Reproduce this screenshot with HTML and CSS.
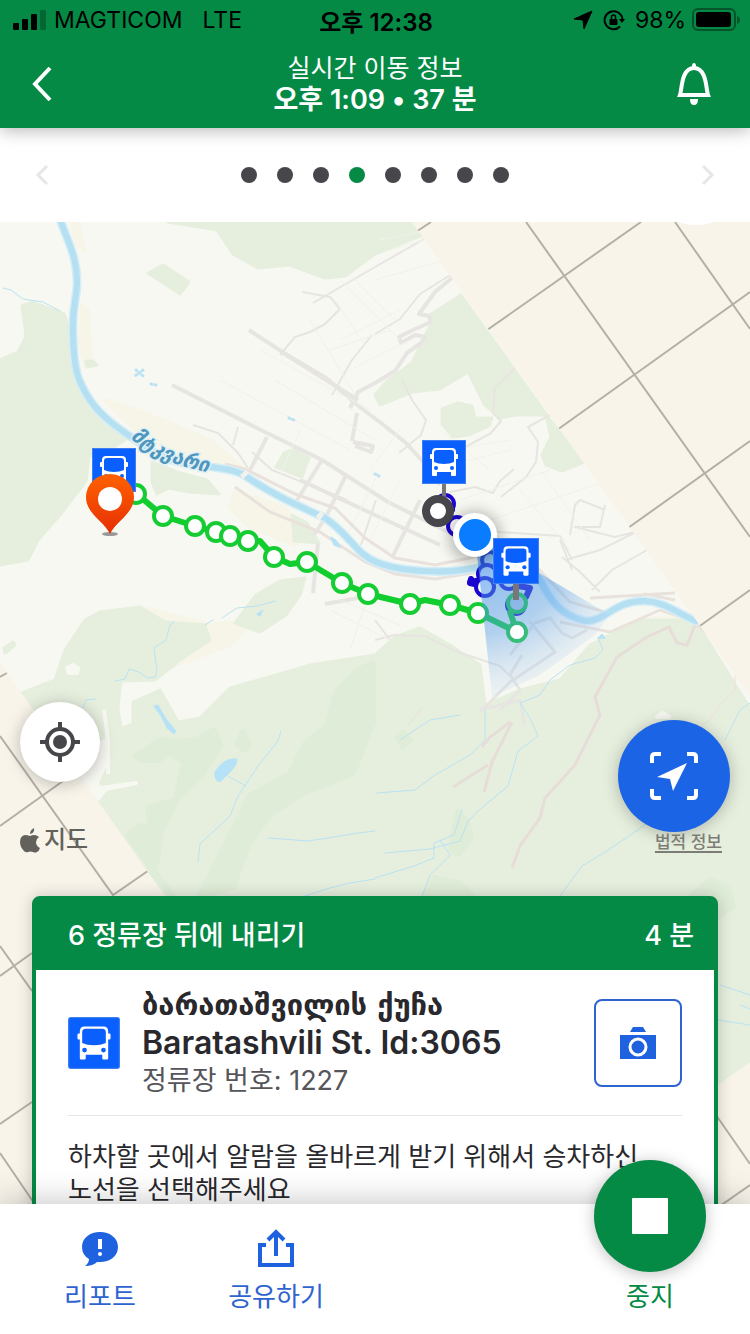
FILE: index.html
```html
<!DOCTYPE html>
<html lang="ko">
<head>
<meta charset="UTF-8">
<meta name="viewport" content="width=device-width, initial-scale=1">
<title>실시간 이동 정보</title>
<link rel="stylesheet" href="styles.css">
</head>
<body>
	<svg class="symbols" aria-hidden="true">
		<symbol id="bus" viewBox="0 0 44 44">
			<rect width="44" height="44" fill="#3f7ff0"/>
			<rect x="1" y="1" width="42" height="42" fill="#0a60ff"/>
			<path fill="#fff" fill-rule="evenodd" d="M14 8h16q4 0 4 4v2h1q1 0 1 1v3q0 1-1 1h-1v16q0 1-1 1h-3q-1 0-1-1v-3H15v3q0 1-1 1h-3q-1 0-1-1V19H9q-1 0-1-1v-3q0-1 1-1h1v-2q0-4 4-4zM15 10q-3 0-3 3v9q4 2 10 2t10-2v-9q0-3-3-3z"/>
			<circle cx="14" cy="28" r="2" fill="#0a60ff"/>
			<circle cx="30" cy="28" r="2" fill="#0a60ff"/>
		</symbol>
	</svg>

	<header class="header">
		<div class="status">
			<div class="carrier">
				<svg width="34" height="22" viewBox="0 0 34 22">
					<rect x="1" y="14" width="6" height="7" rx="1"/>
					<rect x="10" y="10" width="6" height="11" rx="1"/>
					<rect x="19" y="5" width="6" height="16" rx="1"/>
					<rect x="28" y="1" width="6" height="20" rx="1" opacity=".25"/>
				</svg>
				<span>MAGTICOM</span>
				<span class="network">LTE</span>
			</div>
			<div class="clock">오후 12:38</div>
			<div class="battery">
				<svg width="20" height="20" viewBox="0 0 20 20"><path d="M19 1 11 19 10 10 1 9z" stroke="#000" stroke-linejoin="round"/></svg>
				<svg width="22" height="22" viewBox="0 0 22 22">
					<path d="M17 17.500A9 9 0 1 1 19.500 10" fill="none" stroke="#000" stroke-width="2"/>
					<path d="M16 10h6l-3 4z"/>
					<rect x="6.500" y="10" width="8" height="6" rx="1"/>
					<path d="M8.500 10V8q0-2 2-2t2 2v2" fill="none" stroke="#000" stroke-width="1.500"/>
				</svg>
				<span>98%</span>
				<svg class="cell" width="48" height="24" viewBox="0 0 48 24">
					<rect x="1" y="1" width="42" height="21" rx="5" fill="none" stroke="#04552c" stroke-width="2"/>
					<rect x="4" y="4" width="35" height="15" rx="3"/>
					<path d="M45 8q3 1 3 4t-3 4z" fill="#04552c"/>
				</svg>
			</div>
		</div>
		<div class="titlebar">
			<button class="icon-button" aria-label="뒤로">
				<svg width="22" height="36" viewBox="0 0 22 36"><path d="M19 2 4 18l15 16" fill="none" stroke="#fff" stroke-width="4"/></svg>
			</button>
			<h1 class="title">
				<span>실시간 이동 정보</span>
				<strong>오후 1:09 • 37 분</strong>
			</h1>
			<button class="icon-button" aria-label="알림">
				<svg width="34" height="44" viewBox="0 0 34 44">
					<path d="M15 4q0-3 2-3t2 3v3h-4z" fill="#fff"/>
					<path d="M3 33C5 28 4 6 17 6s12 22 14 27z" fill="none" stroke="#fff" stroke-width="4"/>
					<path d="M13 37h8q0 6-4 6t-4-6z" fill="#fff"/>
				</svg>
			</button>
		</div>
	</header>

	<nav class="steps" aria-label="단계">
		<button class="icon-button" aria-label="이전">
			<svg width="14" height="22" viewBox="0 0 14 22"><path d="M12 2 3 11l9 9" fill="none" stroke="#e6e6e6" stroke-width="3"/></svg>
		</button>
		<ol class="dots">
			<li></li>
			<li></li>
			<li></li>
			<li class="current"></li>
			<li></li>
			<li></li>
			<li></li>
			<li></li>
		</ol>
		<button class="icon-button" aria-label="다음">
			<svg width="14" height="22" viewBox="0 0 14 22"><path d="m2 2 9 9-9 9" fill="none" stroke="#e6e6e6" stroke-width="3"/></svg>
		</button>
	</nav>

	<main class="map">
		<svg class="canvas" viewBox="0 222 750 982" preserveAspectRatio="xMidYMin slice">
			<defs>
				<clipPath id="land"><path d="M0 222H412L750 696V1062L600 1170H360L165 896 0 663z"/></clipPath>
				<radialGradient id="beam" gradientUnits="userSpaceOnUse" cx="475" cy="535" r="165">
					<stop offset="0" stop-color="#2f86e8" stop-opacity=".65"/>
					<stop offset=".6" stop-color="#5b9fea" stop-opacity=".45"/>
					<stop offset="1" stop-color="#a9cbf2" stop-opacity=".1"/>
				</radialGradient>
				<linearGradient id="pin" x1="0" y1="0" x2="0" y2="1">
					<stop offset="0" stop-color="#ff6200"/>
					<stop offset="1" stop-color="#e62e05"/>
				</linearGradient>
				<path id="river-name" d="M130 438Q166 468 222 474"/>
				<filter id="soft" x="-50%" y="-50%" width="200%" height="200%"><feGaussianBlur stdDeviation="7"/></filter>
			</defs>
			<rect y="222" width="750" height="982" fill="#f8f4ea"/>

			<!-- empty tiles -->
			<path fill="none" stroke="#b5b0a6" stroke-width="2" d="M526 222 750 537M675 222 750 329M410 236l21-14M480 335 641 222M550 435 750 292M621 533 750 441M690 633 750 590M0 736 113 895 155 866M0 826 70 776M0 677 7 673M102 880l11 15M0 946 32 991M0 976 32 953M0 1124 32 1102M0 1153 34 1203M716 1115 750 1164M720 1206 750 1185"/>

			<g clip-path="url(#land)">
				<rect y="222" width="750" height="982" fill="#f7f8f2"/>
				<!-- sand -->
				<g fill="#f6f5e8" stroke="#f6f5e8" stroke-width="4" stroke-linejoin="round">
					<path d="M72 222h6l6 28-7-5zM82 305l6 5 3 50-6 5-5-20zM105 400l45 15 60 25 30 26-15 4-40-10-50-30zM235 492l50 15 20 30-10 8-45-18-20-20zM140 607l70 18 45-5-25 25-55 20-20 12 10-30zM560 680l80-60 50-5 10 25-60-5-50 15z"/>
				</g>
				<!-- woods -->
				<g fill="#e6efde" stroke="#e6efde" stroke-width="3" stroke-linejoin="round">
					<path d="M168 222 217 230l16 24 25 14 32-3 35 13 20-2 30-22 50-20-10-20z"/>
					<path d="m148 273 15-8 26 17-9 12z"/>
					<path d="m0 360 18-8 8-16-4-30 10-4 32 12 7 18 2 35 12 23 18 26 28 20-22 14-20 6-3 25-26 34-22 25-10 20-28 5z"/>
					<path d="m152 462 25 10 30 8 12 14-30-2-20-4-12 6-5-12z"/>
					<path d="m86 361 7 0 4 4-10 2zM284 453l10-4 15 9-7 19-26-10zM292 515l15 8 12 20-25-2z"/>
					<path d="m430 315 31-20 86 120-32 0-15 3-16-14-8-17-8-15-28 17-28 3-32 13-5-10 12-14 25-18 13-27 6-12z"/>
					<path d="m442 409 16-6 14 3 3 12 17 0-3 8-20 9-16 2-11-13z"/>
					<path d="m546 415 38 47-22 9-16-6-4-10 9-18z"/>
					<path d="m22 693 33-13 10-30 20-30 15-8 40-5 25 15 40 3 5 15-30 20-25 20-33 1-2 6-2 22 3 18-12 8-18 10-35 12-30-30z"/>
					<path d="m256 595 24-14 25-3-5 17-14 20-26 17-25-9z"/>
					<path d="m4 648 9-6 2 3-10 8z"/>
					<path d="m165 896-70-90 6-24 10-22-4-24 10-6 16-6 0-22 27-12 18 32 22-4 30-30 60-17 20-6 65-10 20-18 25-9 30 17 30 20 5 40 35-15 40-10 30-35 50-25 40 0 20 8 50 80v370L600 1180H300z"/>
				</g>
				<g fill="#dfecd7" stroke="#dfecd7" stroke-width="6" stroke-linejoin="round">
					<path d="m172 896-44-60 12-10 12 2-4-20 28-8 8-38-14-10 4-10 22-2 18-10 6 16-18 28-24 24-18 36-2 22-6 18 12 10zM200 896l30-60 20-40 40-22 15-30 22-18 10-35 20-20 16-8v60l-20 50-50 20-32 20-22 30-16 44z"/>
					<path d="m136 756 24-16 18 2-18 18-18 0zM237 744l6-12 6 14-4 4zM458 812l9 10 4 14-12 18-8-5zM424 896l10-18 26 5 12 13zM398 738l5-5 7 7-7 6zM692 896l18-16 18 8 5 18-18 14z"/>
				</g>
				<g fill="#f7f8f2" stroke="#f7f8f2" stroke-width="4" stroke-linejoin="round">
					<path d="m94 786 8 2 34-5-30 6-8 10-4-1zM67 668l6-3 5 3-1 5h-8zM657 717l6-4 6 4zM502 672l26-14 3 20-22 8zM104 710l4 30 0 34"/>
				</g>

				<!-- streets -->
				<g fill="none" stroke="#e7e5e1" stroke-linejoin="round">
					<path stroke-width="4" d="m172 385 95 48 55 27 66 42 80 40M249 330l35 23 42 25 35 30 20 15 25 20 20 22 14 20M283 353l75 47"/>
					<path stroke-width="4" d="m267 437-18 35M322 460l-28 45M346 475l-20 42-12 18M318 543l-5 50M300 480l75 35 65 30M420 500l-28 58M325 604l50-9 30 10"/>
					<path stroke-width="2" d="m302 292 28 5 10 12-15 15-15 8-15 5-15 18M313 303l62-36 56-32M375 334l25-15 20-25 32-20M332 395l20-35 20-25M193 425l25 8 20 20 10 15M238 427l-5 18M252 452l20 18 75 30M376 500l-15 45"/>
					<path stroke-width="4" d="m350 408 8-16 17-9 20-12 12-18 14-10 4-6-10-2-14 8-2-6 16-8 16-7-2-6-10-2 16-22 24-20"/>
					<path stroke-width="4" d="m357 413-5 28M355 446l16 6 2-6-20-4"/>
					<path stroke-width="2" d="m402 380 10 20 14 20-5 15-22 18M515 368l-20 20-2 25 8 8-10 12-55 30M550 415l-22 12 10 15-2 20-10 15-25 20M450 492l25-5 18 6 7-12 14-12M470 527l30 5 60 4 12 24M570 535l5-30 5-5 25 10M560 540l12 30M605 505l-5 22-25 0 40 10 20-5M640 530l-40 20-35 10M600 592l-20-20-18-15M592 590l20-20 35-20"/>
					<path stroke-width="3" d="m510 655 25-32 15-5 12 15 10 5 15-8M480 712l30-30 45-30-25-30M500 710l20-20-10-15 12-20M480 710l40-10 5 25"/>
					<path stroke-width="2" d="m375 640 20-5 30 1 30 15 45 15 15 15M375 620l15 20"/>
				</g>
				<g fill="none" stroke="#f1f1ec" stroke-width="1">
					<path d="m260 350 110 60M275 380l100 60M220 380l130 70M340 280l60 60M350 275l50 50M335 300l30 45M310 320l45 75M340 340l60-30M330 350l60-20M350 370l60-30M380 240l50-10M390 250l50-15M375 280l70-20M400 430l-30 40M440 430l50 40M450 450l60-10M430 470l80-20M460 500l90-30M490 520l120-40M520 490l50 60M540 470l50 70M300 430l-20 45M380 470l-30 60M400 480l-30 60M330 610l60 30M340 600l60 25M370 590l-20 60"/>
				</g>
				<!-- motorway beside the river -->
				<path fill="none" stroke="#e9e2dc" stroke-width="3" d="m235 487 35 25 50 20 45 30 30 12 40 5 50-8M225 464l20 5 50 25 40 14 30 30 30 20 40 7 60-12M530 560l40 42 35 10 40-18 30 6M560 622l50 10 50-22 30 10 20 15M590 598l85-5"/>
				<path fill="none" stroke="#e7ddd8" stroke-width="3" d="m512 868 8-22 20-28 5-20 30-33 25-50-5-18 22-40 30-20 22-10 8 16 10 2 10-25-5-7M510 722l-20 15-8 10M512 722l-20 40-8 30M488 765l-35 22"/>
				<path fill="none" stroke="#ecdfd9" stroke-width="1" d="m735 675 0 15-15 15-10 15-15 10M408 725l15-18"/>

				<!-- water -->
				<g fill="none" stroke-linecap="round" stroke-linejoin="round">
					<path stroke="#d5edf7" stroke-width="9" d="M61 222C67 240 78 258 77 285 76 303 72 305 73 335 74 370 77 380 90 400 105 422 128 434 150 450 180 470 222 463 244 475 270 493 292 503 325 518 350 535 355 553 376 562 400 572 450 575 485 566 510 562 525 555 540 580 550 600 560 615 585 621 605 622 615 600 645 601 665 602 675 612 696 621"/>
					<path stroke="#b5e0f2" stroke-width="6" d="M61 222C67 240 78 258 77 285 76 303 72 305 73 335 74 370 77 380 90 400 105 422 128 434 150 450 180 470 222 463 244 475 270 493 292 503 325 518 350 535 355 553 376 562 400 572 450 575 485 566 510 562 525 555 540 580 550 600 560 615 585 621 605 622 615 600 645 601 665 602 675 612 696 621"/>
					<g stroke="#b9e2f3" stroke-width="1">
						<path d="m3 288 8 2 12 9 20 3 17 9M115 681l10-2 4-10 10 3 8 6 8-1 2-6-3-23 12-8 4-15 4-3M205 625l8-5M222 618l15-10 20-2 18-5M83 708l3-8 10-1M281 731l-3 10-20 25-20 30-8 20-30 28-2 18M228 776l18 10M268 838l40 3 20-3 30-5 17-2M305 896l25-8 20-5 25-4M485 710l0 30-15 15-35 20-20 15-38 3M598 638l5 12-8 8-25 7-20 15-10 15-20 8 10 15 8 18-20 15-10 35-30 25-10 10-8 20-30 8-45 4M462 810l-8 25-20 8 0 15-20 8-39 12M440 840l10 15-20 20-8 21M560 896l22-30 20-12 30-20 25-18M725 740l15-30 10-7M400 740l30-20 30-5M720 985l30 10M740 1005l10 4M718 1020l32 5"/>
						<path fill="#b5e2f7" d="M215 772c6-10 14-14 22-13 0 8-8 14-17 23q-6-1-5-10zM154 706l4-1 8 14 10 12-2 3-7-6-6-12zM598 638l4-4 3 4zM257 614l6-4-3 6zM331 537l5 3 5 8-7-3z"/>
						<path stroke-dasharray="1 3" stroke-width="3" d="m136 370 7 6M143 370l-8 6M151 384l5 1M289 418l5 2M375 474l4 2"/>
					</g>
				</g>
				<path fill="#f3f1ec" d="m240 475 6-5 3 3-6 6zM316 516l5-5 3 4-5 6z"/>
			</g>
			<ellipse cx="696" cy="220" rx="18" ry="5" fill="#fff"/>
			<text class="river-label"><textPath href="#river-name">მტკვარი</textPath></text>

			<!-- second leg -->
			<g fill="none" stroke="#1a06cf" stroke-width="6" stroke-linecap="round" stroke-linejoin="round">
				<path d="m446 498 6 12-6 8 10 10 20 16 12 15-4 14-2 7-12 2M471 579l-1 4 14 3M500 577l12 8 18 3-4 9-10 6"/>
				<g fill="#fff" stroke-width="4">
					<circle cx="445" cy="504" r="9"/>
					<circle cx="457" cy="526" r="9"/>
					<circle cx="490" cy="560" r="8"/>
					<circle cx="487" cy="574" r="9"/>
					<circle cx="485" cy="587" r="9"/>
					<circle cx="509" cy="580" r="9"/>
					<circle cx="516" cy="605" r="9"/>
				</g>
			</g>

			<!-- first leg -->
			<path fill="none" stroke="#0fce2e" stroke-width="6" stroke-linejoin="round" d="M137 494 163 516 195 526 216 532 230 536 248 541 260 541 274 557 290 564 307 562 342 583 368 594 410 604 425 600 450 605 478 613 517 632 510 612 517 603"/>
			<g fill="#fff" stroke="#16cc33" stroke-width="4">
				<circle cx="136" cy="494" r="9"/>
				<circle cx="163" cy="516" r="9"/>
				<circle cx="195" cy="526" r="9"/>
				<circle cx="216" cy="532" r="9"/>
				<circle cx="230" cy="536" r="9"/>
				<circle cx="248" cy="541" r="9"/>
				<circle cx="274" cy="557" r="9"/>
				<circle cx="307" cy="562" r="9"/>
				<circle cx="342" cy="583" r="9"/>
				<circle cx="368" cy="594" r="9"/>
				<circle cx="410" cy="604" r="9"/>
				<circle cx="450" cy="605" r="9"/>
				<circle cx="478" cy="613" r="9"/>
				<circle cx="517" cy="632" r="9"/>
				<circle cx="517" cy="603" r="9" fill="#c2d4e2"/>
			</g>
			<path fill="url(#beam)" d="m475 535 135 80-15 20-55 40-48 22z"/>
			<circle cx="517" cy="632" r="7" fill="#fff"/>
			<circle cx="478" cy="613" r="7" fill="#fff"/>

			<!-- markers -->
			<path stroke="#777" stroke-width="4" d="M444 482v16"/>
			<circle cx="438" cy="511" r="12" fill="#fff" stroke="#46464b" stroke-width="8"/>
			<circle cx="475" cy="537" r="26" opacity=".25" filter="url(#soft)"/>
			<circle cx="475" cy="535" r="19" fill="#0a7cff" stroke="#fff" stroke-width="6"/>
			<path stroke="#777" stroke-width="6" d="M516 582v18"/>
			<use href="#bus" x="422" y="440" width="44" height="44"/>
			<use href="#bus" x="493" y="538" width="46" height="46"/>
			<use href="#bus" x="92" y="448" width="44" height="44"/>
			<ellipse cx="110" cy="534" rx="8" ry="2" fill="#999"/>
			<path fill="url(#pin)" d="M110 534C104 521 86 514 86 497a24 23 0 0 1 48 0c0 17-18 24-24 37z"/>
			<circle cx="110" cy="499" r="12" fill="#fff"/>
		</svg>

		<div class="controls">
			<div class="control left">
				<button class="round locate" aria-label="내 위치">
					<svg width="40" height="40" viewBox="0 0 40 40" fill="none" stroke="#46464b" stroke-width="4">
						<circle cx="20" cy="20" r="13"/>
						<circle cx="20" cy="20" r="7" fill="#46464b" stroke="none"/>
						<path d="M20 0v7M20 33v7M0 20h7M33 20h7"/>
					</svg>
				</button>
				<div class="brand">
					<svg width="20" height="25" viewBox="0 0 20 25" fill="#63615c">
						<path d="M14 0q1 5-4 6 0-4 4-6zM10 8q2-1 4-1 3 0 5 2-3 2-3 5 0 4 4 6-1 3-3 4-2 1-4 0-3-1-5 0-2 1-4-1-4-4-4-9 0-6 5-7 2 0 5 1z"/>
					</svg>
					<span>지도</span>
				</div>
			</div>
			<div class="control right">
				<button class="round follow" aria-label="따라가기">
					<svg width="48" height="48" viewBox="0 0 48 48">
						<path fill="none" stroke="#fff" stroke-width="4" d="M2 11V5q0-3 3-3h6M37 2h6q3 0 3 3v6M46 37v6q0 3-3 3h-6M11 46H5q-3 0-3-3v-6"/>
						<path fill="#fff" d="M37 11 23 39 20 27 7 25z"/>
					</svg>
				</button>
				<a class="legal" href="#">법적 정보</a>
			</div>
		</div>

		<section class="card">
			<header class="card-header">
				<span>6 정류장 뒤에 내리기</span>
				<span>4 분</span>
			</header>
			<div class="stop">
				<svg class="stop-icon" viewBox="0 0 44 44"><use href="#bus"/></svg>
				<div class="stop-info">
					<h2 class="stop-name"><span class="georgian">ბარათაშვილის ქუჩა</span><br>Baratashvili St. Id:3065</h2>
					<p class="stop-number">정류장 번호: 1227</p>
				</div>
				<button class="camera" aria-label="사진">
					<svg width="36" height="32" viewBox="0 0 36 32">
						<path d="m13 0h10l3 5H10zM0 8h36v24H0z" fill="#1f62e0"/>
						<circle cx="18" cy="20" r="8" fill="none" stroke="#fff" stroke-width="3"/>
					</svg>
				</button>
			</div>
			<p class="hint">하차할 곳에서 알람을 올바르게 받기 위해서 승차하신 노선을 선택해주세요</p>
		</section>
	</main>

	<footer class="actions">
		<button class="action">
			<svg width="36" height="36" viewBox="0 0 36 36">
				<path fill="#1f62e0" d="M18 1c10 0 18 6 18 15s-8 15-18 15q-2 0-3 0-4 4-12 4 4-3 4-7-7-4-7-12C0 7 8 1 18 1z"/>
				<path fill="#fff" d="M16 8h4v10h-4z"/>
				<circle cx="18" cy="23" r="2" fill="#fff"/>
			</svg>
			<span>리포트</span>
		</button>
		<button class="action">
			<svg width="36" height="38" viewBox="0 0 36 38" fill="none" stroke="#1f62e0" stroke-width="4">
				<path d="M8 16H2v20h32V16h-6M18 27V4M10 11l8-8 8 8"/>
			</svg>
			<span>공유하기</span>
		</button>
		<button class="action end">
			<span class="round halt"><svg width="36" height="36" viewBox="0 0 36 36"><rect width="36" height="36" rx="1" fill="#fff"/></svg></span>
			<span>중지</span>
		</button>
	</footer>
</body>
</html>
```
FILE: styles.css
```css
* {
	box-sizing: border-box;
}
body {
	margin: 0;
	height: 100vh;
	display: flex;
	flex-direction: column;
	overflow: hidden;
	background: #fff;
	color: #28282d;
	font-family: Inter, "Noto Sans CJK KR", sans-serif;
	font-size: 26px;
}
button {
	padding: 0;
	border: 0;
	background: none;
	color: inherit;
	font: inherit;
	cursor: pointer;
}
svg {
	display: block;
	flex: none;
}
h1, h2, p, ol {
	margin: 0;
	padding: 0;
	font-weight: 400;
}
.symbols {
	position: absolute;
	width: 0;
	height: 0;
}

/* header */
.header {
	position: relative;
	z-index: 2;
	background: #048a45;
	box-shadow: 0 2px 16px rgba(0, 0, 0, .3);
}
.status {
	display: grid;
	grid-template-columns: 1fr auto 1fr;
	align-items: center;
	height: 40px;
	padding: 0 10px 0 12px;
	color: #000;
	font-size: 23px;
}
.carrier, .battery {
	display: flex;
	align-items: center;
	gap: 8px;
}
.network {
	margin-left: 12px;
}
.battery {
	gap: 10px;
	justify-content: flex-end;
}
.cell {
	margin-left: -4px;
}
.clock {
	font-size: 24px;
	font-weight: 600;
}
.titlebar {
	display: flex;
	align-items: center;
	justify-content: space-between;
	height: 88px;
	padding: 0 20px;
	color: #fff;
}
.icon-button {
	display: flex;
	align-items: center;
	justify-content: center;
	width: 48px;
	height: 48px;
}
.titlebar .icon-button:last-child {
	width: 72px;
}
.titlebar .icon-button:first-child {
	width: 44px;
	margin-right: 28px;
}
.title {
	display: flex;
	flex-direction: column;
	text-align: center;
	font-size: 25px;
	line-height: 32px;
}
.title strong {
	font-size: 27px;
	font-weight: 600;
}

/* steps */
.steps {
	display: flex;
	align-items: center;
	justify-content: space-between;
	height: 94px;
	padding: 0 18px;
	flex: none;
}
.dots {
	display: flex;
	gap: 20px;
	list-style: none;
}
.dots li {
	width: 16px;
	height: 16px;
	border-radius: 50%;
	background: #46464b;
}
.dots .current {
	background: #048a45;
}

/* map */
.map {
	position: relative;
	flex: 1;
	min-height: 0;
	overflow: hidden;
}
.canvas {
	position: absolute;
	top: 0;
	left: 0;
	width: 100%;
	height: 100%;
}
.river-label {
	fill: #4f97bd;
	stroke: #dff0f7;
	stroke-width: 3px;
	paint-order: stroke;
	font-family: "DejaVu Sans", sans-serif;
	font-size: 20px;
	font-style: italic;
	font-weight: 700;
}
.controls {
	position: relative;
	display: flex;
	justify-content: space-between;
	padding: 480px 20px 0;
}
.round {
	display: flex;
	align-items: center;
	justify-content: center;
	width: 112px;
	height: 112px;
	border-radius: 50%;
	box-shadow: 0 2px 16px rgba(0, 0, 0, .25);
}
.control {
	display: flex;
	flex-direction: column;
}
.right {
	align-items: flex-end;
	padding-top: 18px;
}
.locate {
	width: 80px;
	height: 80px;
	background: #fff;
}
.follow {
	background: #1c64e6;
}
.brand {
	display: flex;
	align-items: center;
	gap: 4px;
	margin-top: 40px;
	line-height: 36px;
	font-size: 24px;
	font-weight: 500;
	color: #63615c;
}
.legal {
	margin-right: 8px;
	color: #7c7d76;
	font-size: 17px;
	font-weight: 500;
	line-height: 20px;
	text-decoration-thickness: 2px;
	text-underline-offset: 3px;
}

/* card */
.card {
	position: relative;
	margin: 38px 32px 0;
	border: 4px solid #048a45;
	border-radius: 8px 8px 0 0;
	background: #fff;
	box-shadow: 0 0 16px rgba(0, 0, 0, .2);
}
.card-header {
	display: flex;
	align-items: center;
	justify-content: space-between;
	height: 70px;
	padding: 0 20px 4px 32px;
	background: #048a45;
	color: #fff;
	font-size: 27px;
	font-weight: 500;
}
.stop {
	display: flex;
	align-items: center;
	gap: 22px;
	height: 146px;
	margin: 0 32px;
	border-bottom: 1px solid #e6e6e8;
}
.stop-icon {
	width: 52px;
	height: 52px;
	border-radius: 3px;
}
.stop-info {
	flex: 1;
}
.stop-name {
	font-size: 32px;
	font-weight: 600;
	line-height: 38px;
	white-space: nowrap;
}
.georgian {
	font-family: "DejaVu Sans", sans-serif;
	font-size: 29px;
	font-weight: 700;
}
.stop-number {
	color: #55555a;
	font-size: 27px;
	line-height: 38px;
}
.camera {
	display: flex;
	align-items: center;
	justify-content: center;
	width: 88px;
	height: 88px;
	border: 2px solid #2e63d0;
	border-radius: 8px;
}
.hint {
	padding: 24px 32px;
	line-height: 33px;
	word-break: keep-all;
}

/* bottom actions */
.actions {
	position: relative;
	display: flex;
	flex: none;
	gap: 64px;
	height: 130px;
	padding: 0 44px;
	background: #fff;
	box-shadow: 0 0 32px rgba(0, 0, 0, .25);
}
.action {
	display: flex;
	flex-direction: column;
	align-items: center;
	justify-content: flex-end;
	gap: 10px;
	width: 112px;
	padding-bottom: 17px;
	color: #2e63d0;
	line-height: 40px;
	white-space: nowrap;
}
.end {
	gap: 5px;
	margin-left: auto;
	color: #048a45;
}
.halt {
	flex: none;
	background: #048a45;
}
```
